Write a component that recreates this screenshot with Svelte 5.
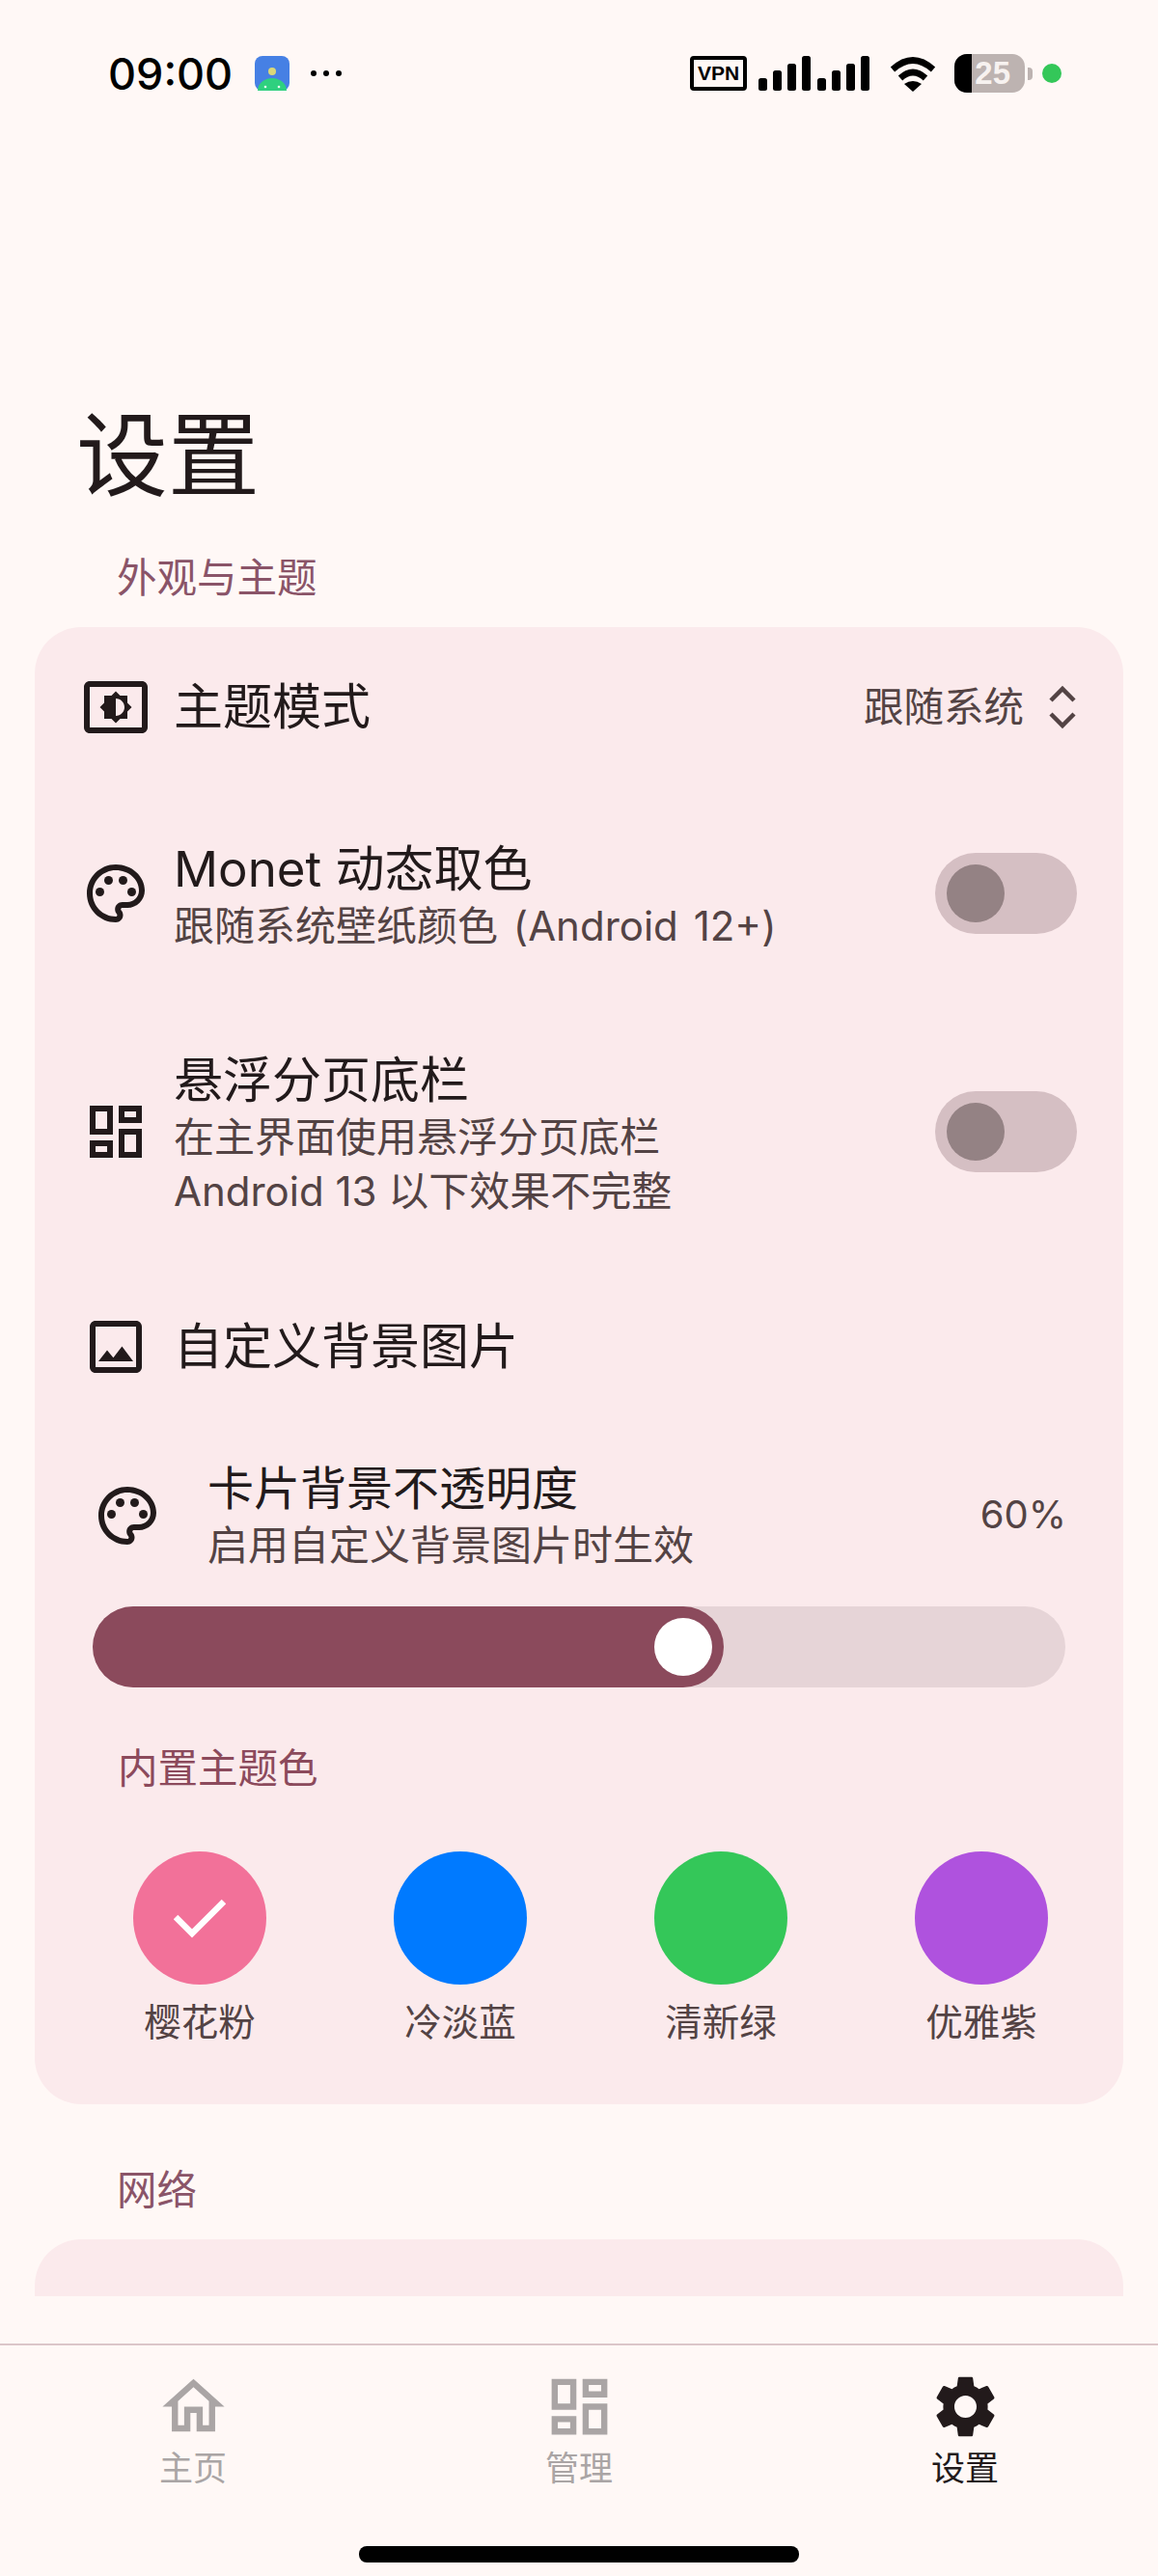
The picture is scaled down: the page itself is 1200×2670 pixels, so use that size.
<script>
	const swatches = [
		{ name: '樱花粉', color: '#f27199', checked: true },
		{ name: '冷淡蓝', color: '#007aff' },
		{ name: '清新绿', color: '#34c759' },
		{ name: '优雅紫', color: '#af52de' }
	];

	const signal = [787, 802, 817, 832, 848, 863, 878, 893];
	const signalHeights = [13, 21, 28, 36, 13, 21, 28, 36];

	const paths = {
		theme: 'M21 3H3c-1.11 0-2 .89-2 2v14c0 1.11.89 2 2 2h18c1.11 0 2-.89 2-2V5c0-1.11-.89-2-2-2zm0 16.01H3V4.99h18v14.02zM8 16h2.5l1.5 1.5 1.5-1.5H16v-2.5l1.5-1.5-1.5-1.5V8h-2.5L12 6.5 10.5 8H8v2.5L6.5 12 8 13.5V16zm4-7c1.66 0 3 1.34 3 3s-1.34 3-3 3V9z',
		palette: 'M12 22C6.49 22 2 17.51 2 12S6.49 2 12 2s10 4.04 10 9c0 3.31-2.69 6-6 6h-1.77c-.28 0-.5.22-.5.5 0 .12.05.23.13.33.41.47.64 1.06.64 1.67 0 1.38-1.12 2.5-2.5 2.5zm0-18c-4.41 0-8 3.59-8 8s3.59 8 8 8c.28 0 .5-.22.5-.5 0-.16-.08-.28-.14-.35-.41-.46-.63-1.05-.63-1.65 0-1.38 1.12-2.5 2.5-2.5H16c2.21 0 4-1.79 4-4 0-3.86-3.59-7-8-7z',
		dashboard: 'M19 5v2h-4V5h4M9 5v6H5V5h4m10 8v6h-4v-6h4M9 17v2H5v-2h4M21 3h-8v6h8V3zM11 3H3v10h8V3zm10 8h-8v10h8V11zm-10 4H3v6h8v-6z',
		image: 'M19 5v14H5V5h14m0-2H5c-1.1 0-2 .9-2 2v14c0 1.1.9 2 2 2h14c1.1 0 2-.9 2-2V5c0-1.1-.9-2-2-2zm-4.86 8.86l-3 3.87L9 13.14 6 17h12l-3.86-5.14z',
		home: 'M12 5.69l5 4.5V18h-2v-6H9v6H7v-7.81l5-4.5M12 3L2 12h3v8h6v-6h2v6h6v-8h3L12 3z',
		gear: 'M19.14 12.94c.04-.3.06-.61.06-.94 0-.32-.02-.64-.07-.94l2.03-1.58c.18-.14.23-.41.12-.61l-1.92-3.32c-.12-.22-.37-.29-.59-.22l-2.39.96c-.5-.38-1.03-.7-1.62-.94l-.36-2.54c-.04-.24-.24-.41-.48-.41h-3.84c-.24 0-.43.17-.47.41l-.36 2.54c-.59.24-1.13.57-1.62.94l-2.39-.96c-.22-.08-.47 0-.59.22L2.74 8.87c-.12.21-.08.47.12.61l2.03 1.58c-.05.3-.09.63-.09.94s.02.64.07.94l-2.03 1.58c-.18.14-.23.41-.12.61l1.92 3.32c.12.22.37.29.59.22l2.39-.96c.5.38 1.03.7 1.62.94l.36 2.54c.05.24.24.41.48.41h3.84c.24 0 .44-.17.47-.41l.36-2.54c.59-.24 1.13-.56 1.62-.94l2.39.96c.22.08.47 0 .59-.22l1.92-3.32c.12-.22.07-.47-.12-.61l-2.01-1.58zM12 15.6c-1.98 0-3.6-1.62-3.6-3.6s1.62-3.6 3.6-3.6 3.6 1.62 3.6 3.6-1.62 3.6-3.6 3.6z'
	};

	const nav = [
		{ label: '主页', icon: paths.home },
		{ label: '管理', icon: paths.dashboard },
		{ label: '设置', icon: paths.gear, active: true }
	];

	const paletteDots = [[6.5, 11.5], [9.5, 7.5], [14.5, 7.5], [17.5, 11.5]];
</script>

{#snippet icon(d, dots = [])}
	<svg class="icon" viewBox="0 0 24 24" fill="currentColor">
		<path {d} />
		{#each dots as [cx, cy]}
			<circle {cx} {cy} r="1.5" />
		{/each}
	</svg>
{/snippet}

{#snippet toggle()}
	<div class="toggle"><span class="toggle-thumb"></span></div>
{/snippet}

<div class="page">
	<main class="content">
		<header class="status">
			<div class="status-left">
				<span class="time">09:00</span>
				<svg class="app-icon" viewBox="0 0 36 36">
					<rect width="36" height="36" rx="8" fill="#4680e4" />
					<ellipse cx="18" cy="36" rx="15" ry="13" fill="#2fd07f" />
					<circle cx="18" cy="16" r="4" fill="#d9d77a" />
					<circle cx="11" cy="32" r="1.3" fill="#e8fff2" />
					<circle cx="25" cy="32" r="1.3" fill="#e8fff2" />
				</svg>
				<svg class="more" viewBox="0 0 32 6">
					<circle cx="3" cy="3" r="3" />
					<circle cx="16" cy="3" r="3" />
					<circle cx="29" cy="3" r="3" />
				</svg>
			</div>
			<div class="status-right">
				<span class="vpn">VPN</span>
				<svg class="signal" viewBox="787 0 115 36">
					{#each signal as x, i}
						<rect {x} y={36 - signalHeights[i]} width="9" height={signalHeights[i]} rx="2.5" />
					{/each}
				</svg>
				<svg class="wifi" viewBox="0 0 48 37" fill="none" stroke="#000" stroke-width="6.5">
					<path d="M3 14Q24 -5 45 14" />
					<path d="M11 23Q24 11 37 23" />
					<path d="M15 29Q24 23 33 29L24 37Z" fill="#000" stroke="none" />
				</svg>
				<div class="battery">
					<span class="battery-fill"></span>
					<span class="battery-text">25</span>
				</div>
				<span class="battery-nub"></span>
				<span class="dot"></span>
			</div>
		</header>

		<h1 class="title">设置</h1>
		<h2 class="section">外观与主题</h2>

		<section class="card">
			<div class="row row-mode">
				{@render icon(paths.theme)}
				<div class="row-text"><div class="row-title">主题模式</div></div>
				<span class="value">跟随系统</span>
				<svg class="unfold" viewBox="0 0 30 46" fill="none" stroke="currentColor" stroke-width="4.5">
					<path d="M3 16L15 4L27 16" />
					<path d="M3 30L15 42L27 30" />
				</svg>
			</div>

			<div class="row row-monet">
				{@render icon(paths.palette, paletteDots)}
				<div class="row-text shifted">
					<div class="row-title">Monet 动态取色</div>
					<div class="row-sub wide">跟随系统壁纸颜色 (Android 12+)</div>
				</div>
				{@render toggle()}
			</div>

			<div class="row row-float">
				{@render icon(paths.dashboard)}
				<div class="row-text shifted">
					<div class="row-title">悬浮分页底栏</div>
					<div class="row-sub">在主界面使用悬浮分页底栏</div>
					<div class="row-sub">Android 13 以下效果不完整</div>
				</div>
				{@render toggle()}
			</div>

			<div class="row row-image">
				{@render icon(paths.image)}
				<div class="row-text"><div class="row-title">自定义背景图片</div></div>
			</div>

			<div class="row row-opacity">
				{@render icon(paths.palette, paletteDots)}
				<div class="row-text">
					<div class="row-title">卡片背景不透明度</div>
					<div class="row-sub">启用自定义背景图片时生效</div>
				</div>
				<span class="value percent">60%</span>
			</div>

			<div class="slider">
				<div class="slider-fill" style="width: {654}px"><span class="slider-thumb"></span></div>
			</div>

			<h3 class="section inner">内置主题色</h3>

			<div class="swatches">
				{#each swatches as s}
					<div class="swatch">
						<div class="swatch-circle" style="background: {s.color}">
							{#if s.checked}
								<svg viewBox="0 0 54 42" fill="none" stroke="#fff" stroke-width="6.5">
									<path d="M2 20L19 37L52 4" />
								</svg>
							{/if}
						</div>
						<span class="swatch-name">{s.name}</span>
					</div>
				{/each}
			</div>
		</section>

		<h2 class="section network">网络</h2>
		<section class="card card-next"></section>
	</main>

	<nav class="nav">
		{#each nav as item}
			<div class="nav-item" class:active={item.active}>
				<svg class="nav-icon" viewBox="0 0 24 24" fill="currentColor"><path d={item.icon} /></svg>
				<span class="nav-label">{item.label}</span>
			</div>
		{/each}
	</nav>
	<div class="home-bar"></div>
</div>

<style>
	:global(body) {
		margin: 0;
		background: #fff8f6;
	}

	.page {
		width: 1200px;
		height: 2670px;
		overflow: hidden;
		background: #fff8f6;
		color: #221a1b;
		font-family: Inter, 'Noto Sans CJK SC', sans-serif;
	}

	.content {
		height: 2380px;
		overflow: hidden;
		margin-bottom: 49px;
	}

	/* status bar */
	.status {
		height: 152px;
		display: flex;
		align-items: center;
		justify-content: space-between;
		padding: 0 100px 0 112px;
		color: #000;
	}

	.status-left,
	.status-right {
		display: flex;
		align-items: center;
	}

	.time {
		font-size: 45px;
		font-weight: 500;
		width: 152px;
		line-height: 1;
	}

	.app-icon {
		width: 36px;
		height: 36px;
		margin-right: 22px;
	}

	.more {
		width: 32px;
		height: 6px;
	}

	.vpn {
		box-sizing: border-box;
		width: 59px;
		height: 36px;
		border: 4px solid #000;
		border-radius: 4px;
		font: 700 21px/28px 'Liberation Sans', sans-serif;
		text-align: center;
		margin-right: 12px;
	}

	.signal {
		width: 115px;
		height: 36px;
		margin-right: 21px;
	}

	.wifi {
		width: 48px;
		height: 37px;
		margin-right: 19px;
	}

	.battery {
		position: relative;
		width: 73px;
		height: 40px;
		border-radius: 13px;
		overflow: hidden;
		background: #bdb3b1;
	}

	.battery-fill {
		position: absolute;
		left: 0;
		top: 0;
		bottom: 0;
		width: 18px;
		background: #000;
	}

	.battery-text {
		position: absolute;
		left: 0;
		width: 58px;
		text-align: right;
		top: 0;
		color: #f7f2f0;
		font: 700 33px/40px 'Liberation Sans', sans-serif;
	}

	.battery-nub {
		width: 5px;
		height: 13px;
		margin-left: 3px;
		border-radius: 0 4px 4px 0;
		background: #bdb3b1;
	}

	.dot {
		width: 20px;
		height: 20px;
		margin-left: 10px;
		border-radius: 50%;
		background: #34c759;
	}

	/* headings */
	.title {
		margin: 271px 0 51px 79px;
		font-size: 95px;
		font-weight: 400;
		line-height: 100px;
	}

	.section {
		margin: 0 0 26px 121px;
		font-size: 41.5px;
		font-weight: 400;
		line-height: 50px;
		color: #8a5468;
	}

	.section.inner {
		margin: 59px 0 0 50px;
		color: #8c4a5c;
	}

	.section.network {
		margin: 64px 0 26px 121px;
	}

	/* cards */
	.card {
		margin: 0 36px;
		padding: 0 48px 60px 36px;
		border-radius: 48px;
		background: #fbeaec;
	}

	.card-next {
		height: 200px;
		padding: 0;
	}

	.row {
		display: flex;
		align-items: center;
	}

	.row-mode { height: 166px; }
	.row-monet { height: 220px; }
	.row-float { height: 274px; }
	.row-image { height: 172px; }
	.row-opacity { height: 177px; padding-left: 12px; padding-right: 11px; }

	.icon {
		flex: none;
		width: 72px;
		height: 72px;
		margin: 0 24px 0 12px;
	}

	.row-opacity .icon {
		margin-right: 47px;
	}

	.row-text {
		flex: 1;
		min-width: 0;
	}

	.row-text.shifted {
		padding-top: 6px;
	}

	.row-title {
		font-size: 51px;
		line-height: 62px;
	}

	.row-opacity .row-title {
		font-size: 48px;
	}

	.row-sub {
		font-size: 42px;
		line-height: 56px;
		color: #534344;
	}

	.row-sub.wide {
		word-spacing: 4px;
	}

	.value {
		font-size: 41.5px;
		line-height: 50px;
		color: #534344;
	}

	.percent {
		font-size: 40px;
		margin-bottom: 2px;
	}

	.unfold {
		width: 30px;
		height: 46px;
		margin-left: 25px;
		color: #534344;
	}

	.toggle {
		flex: none;
		width: 147px;
		height: 84px;
		padding: 12px;
		box-sizing: border-box;
		border-radius: 42px;
		background: #d5bfc3;
	}

	.toggle-thumb {
		display: block;
		width: 60px;
		height: 60px;
		border-radius: 50%;
		background: #948284;
	}

	/* slider */
	.slider {
		height: 84px;
		margin: 6px 12px 0 24px;
		border-radius: 42px;
		background: #e6d4d7;
	}

	.slider-fill {
		height: 84px;
		box-sizing: border-box;
		padding: 12px 12px 12px 0;
		border-radius: 42px;
		background: #8b4a5c;
		display: flex;
		justify-content: flex-end;
	}

	.slider-thumb {
		width: 60px;
		height: 60px;
		border-radius: 50%;
		background: #fff;
	}

	/* theme colours */
	.swatches {
		display: grid;
		grid-template-columns: repeat(4, 270px);
		margin-top: 61px;
	}

	.swatch {
		display: flex;
		flex-direction: column;
		align-items: center;
	}

	.swatch-circle {
		width: 138px;
		height: 138px;
		border-radius: 50%;
		display: flex;
		align-items: center;
		justify-content: center;
	}

	.swatch-circle svg {
		width: 54px;
		height: 42px;
	}

	.swatch-name {
		margin-top: 14px;
		font-size: 38.5px;
		line-height: 50px;
		color: #534344;
	}

	/* bottom nav */
	.nav {
		display: grid;
		grid-template-columns: repeat(3, 1fr);
		border-top: 2px solid #dcc6c9;
		padding-top: 25px;
		color: #aaa5a5;
	}

	.nav-item {
		display: flex;
		flex-direction: column;
		align-items: center;
	}

	.nav-item.active {
		color: #221a1b;
	}

	.nav-icon {
		width: 77px;
		height: 77px;
	}

	.nav-label {
		font-size: 35px;
		line-height: 46px;
		margin-top: 2px;
	}

	.home-bar {
		width: 456px;
		height: 17px;
		margin: 58px auto 0;
		border-radius: 8px;
		background: #000;
	}
</style>
